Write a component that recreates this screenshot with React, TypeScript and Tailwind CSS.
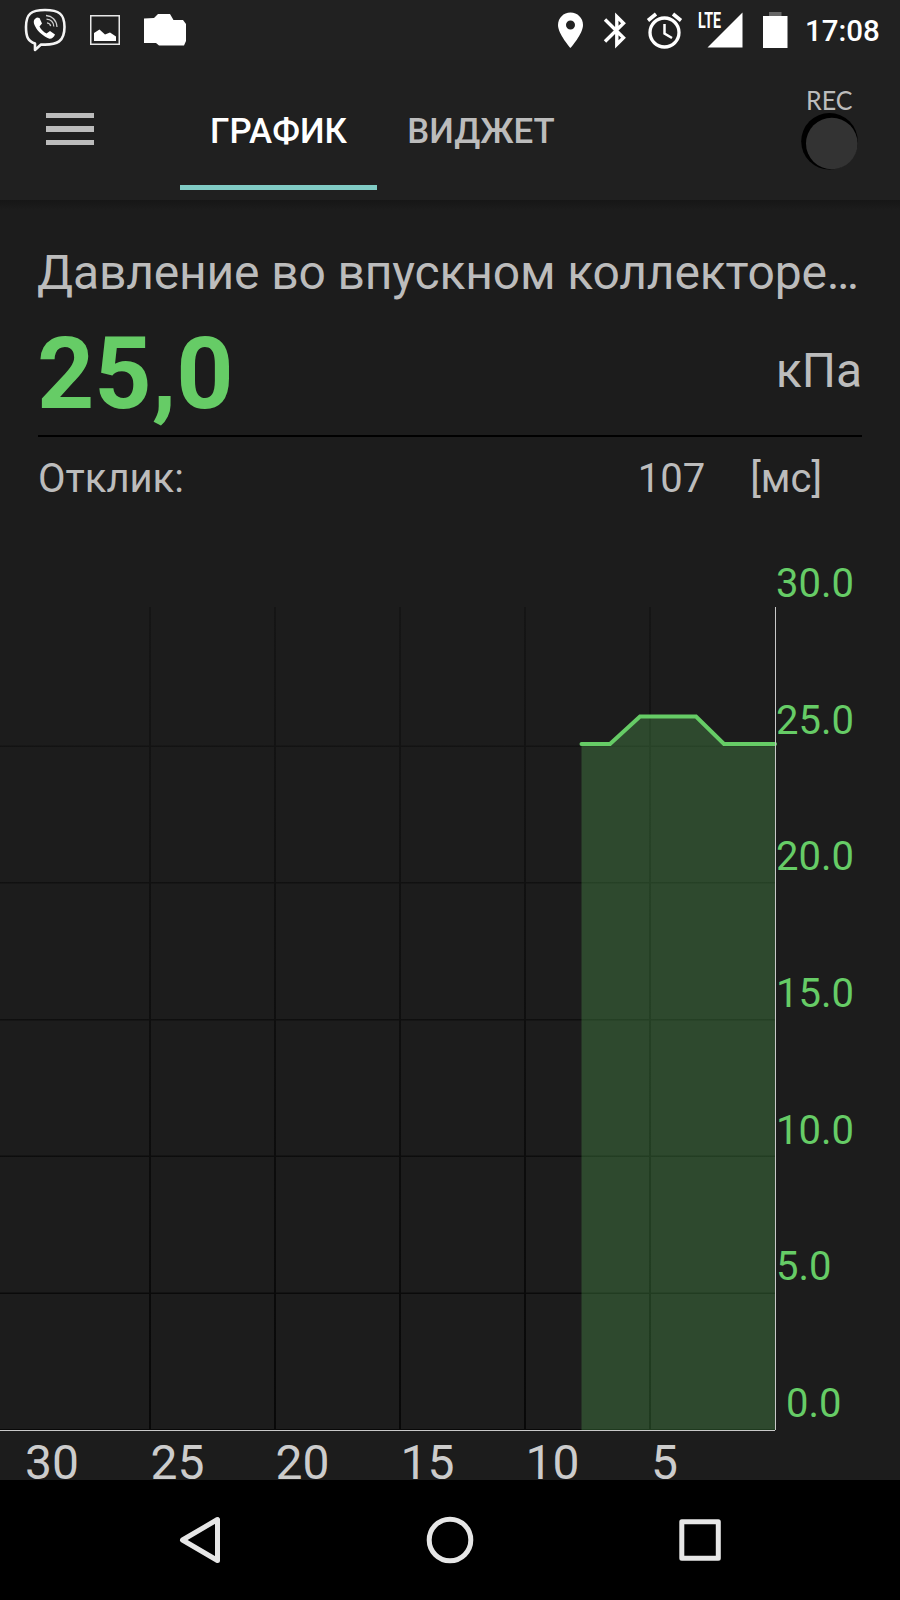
import React from 'react';

const GREEN = '#66cc66';

const yLabels = [
  { text: '30.0', x: 776, y: 396.5 },
  { text: '25.0', x: 776, y: 533.5 },
  { text: '20.0', x: 776, y: 670 },
  { text: '15.0', x: 776, y: 807 },
  { text: '10.0', x: 776, y: 943.5 },
  { text: '5.0', x: 776, y: 1080 },
  { text: '0.0', x: 786, y: 1216.5 },
];

const xLabels = [
  { text: '30', x: 25 },
  { text: '25', x: 150.5 },
  { text: '20', x: 275.5 },
  { text: '15', x: 400.5 },
  { text: '10', x: 525.5 },
  { text: '5', x: 651 },
];

const gridX = [150, 275, 400, 525, 650];
const gridY = [546.5, 683, 820, 956.5, 1093.5];

function ViberIcon() {
  return (
    <svg className="h-[60px] w-[44px]" viewBox="23 0 44 60" fill="none">
      <path
        d="M45 10C31 10 26 14 26 27C26 37 28 41 35 43.5V50L41 44.5C58 45.5 64.5 41 64.5 27C64.5 14 59 10 45 10Z"
        stroke="#f4f4f4"
        strokeWidth="2.6"
        strokeLinejoin="round"
      />
      <path
        d="M37 17.5C33.5 19 33 22 35 26C38 32 43 36 49.5 38.8C52 39 54 37 55 34.5L50 31L46.5 33.5C43.5 32 41 29.5 39.5 26.5L42 23.5L39.5 18Z"
        fill="#fff"
      />
      <path
        d="M46 15.5C52 16 56.5 20 57 27M46.5 19.2C51 19.5 53.5 22 53.8 26.5M47 22.8C49 23 50.3 24 50.7 26.2"
        stroke="#ccc"
        strokeWidth="1.3"
      />
    </svg>
  );
}

function StatusBar() {
  return (
    <div className="flex h-[60px] items-center bg-[#212121] pr-[20px] pl-[23px]">
      <ViberIcon />
      <svg className="ml-[22px] h-[60px] w-[32px]" viewBox="89 0 32 60" fill="none">
        <rect x="90.75" y="15.75" width="28.5" height="28.5" stroke="#e8e8e8" strokeWidth="1.5" />
        <path d="M94 41V33L99.5 29.5L105 34.5L110 32.5L116 36.5V41Z" fill="#fff" />
      </svg>
      <svg className="ml-[22px] h-[60px] w-[44px]" viewBox="143 0 44 60" fill="#fff">
        <path d="M144 18.5L154 18L158 14H170L173.5 20H183L186 24V41L184 45.5H159L156 43H144Z" />
      </svg>

      <div className="ml-auto flex items-center">
        <svg className="h-[60px] w-[27px]" viewBox="557 0 27 60" fill="#fff">
          <path
            fillRule="evenodd"
            d="M570.5 12.5C563.5 12.5 558 18 558 25C558 34 570.5 48 570.5 48S583 34 583 25C583 18 577.5 12.5 570.5 12.5ZM570.5 20.5A4.5 4.5 0 1 1 570.5 29.5A4.5 4.5 0 1 1 570.5 20.5Z"
          />
        </svg>
        <svg className="ml-[19px] h-[60px] w-[25px]" viewBox="603 0 25 60" fill="none">
          <path
            d="M605 19.5L623.5 37.8L616.8 44.5V16.5L623.5 23.2L605 41.5"
            stroke="#fff"
            strokeWidth="3.4"
          />
        </svg>
        <svg className="ml-[18px] h-[60px] w-[38px]" viewBox="646 0 38 60" fill="none" stroke="#fff">
          <circle cx="664.5" cy="32.5" r="14.5" strokeWidth="3.3" />
          <path d="M664.5 24V33.5L672 38" strokeWidth="2.5" />
          <path d="M648 20.5L656 14M673 14L681 20.5" strokeWidth="3.6" />
        </svg>
        <svg className="ml-[13px] h-[60px] w-[47px]" viewBox="697 0 47 60" fill="#fff">
          <path d="M742.5 12.5V47.5H707.5Z" />
          <text
            x="698"
            y="28"
            fontFamily="Roboto, sans-serif"
            fontWeight="700"
            fontSize="21.5"
            textLength="23"
            lengthAdjust="spacingAndGlyphs"
          >
            LTE
          </text>
        </svg>
        <svg className="ml-[18px] h-[60px] w-[26px]" viewBox="762 0 26 60">
          <rect x="769" y="12" width="12.5" height="4" fill="#666" />
          <rect x="763" y="16" width="24.5" height="32" fill="#fff" />
        </svg>
        <span className="ml-[17px] w-[75px] text-[29.5px] leading-[60px] font-medium whitespace-nowrap text-white">
          <span className="relative top-px">17:08</span>
        </span>
      </div>
    </div>
  );
}

function AppBar() {
  return (
    <header className="flex h-[140px] items-start bg-[#202020]">
      <div className="mt-[53px] ml-[46px] flex w-[47.5px] flex-col gap-[8px]">
        <div className="h-[5.3px] bg-[#bcbcbc]" />
        <div className="h-[5.3px] bg-[#bcbcbc]" />
        <div className="h-[5.3px] bg-[#bcbcbc]" />
      </div>
      <nav className="ml-[86.5px] flex text-[34.8px] font-medium">
        <div className="h-[130px] w-[197px] border-b-[5px] border-[#80cbc4] text-center leading-[143px] text-white">
          ГРАФИК
        </div>
        <div className="h-[130px] w-[208px] text-center leading-[143px] text-[#bcbcbc]">ВИДЖЕТ</div>
      </nav>
      <svg className="mt-[20px] ml-[215px] h-[100px] w-[60px]" viewBox="800 80 60 100">
        <text
          x="806"
          y="109.5"
          fontFamily="Lato, sans-serif"
          fontSize="26.5"
          fill="#bcbcbc"
          textLength="46.5"
          lengthAdjust="spacingAndGlyphs"
        >
          REC
        </text>
        <circle cx="829.5" cy="141.3" r="28.3" fill="#000" />
        <circle cx="831.8" cy="143.5" r="25.8" fill="#333" />
      </svg>
    </header>
  );
}

function Reading() {
  return (
    <section className="px-[38px] pt-[45px] text-[#bcbcbc]">
      <h1 className="-ml-px text-[48px] leading-[56px] tracking-[-0.16px] whitespace-nowrap">
        Давление во впускном коллекторе…
      </h1>
      <div className="flex h-[136px] items-center justify-between border-b-2 border-black pt-[5px]">
        <span className="mt-[6px] -ml-px text-[100px] leading-[100px] font-bold text-[#66cc66]">25,0</span>
        <span className="text-[48px]">кПа</span>
      </div>
      <div className="flex h-[65px] items-end text-[40px] leading-[47px]">
        <span>Отклик:</span>
        <span className="ml-auto">107</span>
        <span className="ml-[45px] mr-[40px]">[мс]</span>
      </div>
    </section>
  );
}

function Chart() {
  return (
    <svg
      className="block h-[978px] w-full overflow-visible"
      viewBox="0 302 900 978"
      fontFamily="Roboto, sans-serif"
    >
      <defs>
        <linearGradient id="grid" gradientUnits="userSpaceOnUse" x1="0" y1="407" x2="0" y2="1230">
          <stop offset="0" stopColor="#151515" />
          <stop offset="1" stopColor="#080808" />
        </linearGradient>
      </defs>
      {gridX.map((x) => (
        <rect key={x} x={x - 1} y="407" width="2" height="823" fill="url(#grid)" />
      ))}
      {gridY.map((y) => (
        <rect key={y} x="0" y={y - 1} width="775" height="1.5" fill="url(#grid)" />
      ))}
      <rect x="0" y="1229" width="775" height="1" fill="#080808" />

      {/* data */}
      <path d="M581.5 544H610L640 516.5H696L724 544H775V1230H581.5Z" fill={GREEN} fillOpacity="0.26" />
      <path
        d="M581.5 544H610L640 516.5H696L724 544H775"
        fill="none"
        stroke={GREEN}
        strokeWidth="4"
        strokeLinecap="round"
      />

      {/* axes */}
      <rect x="775" y="407" width="1" height="823" fill="#c8c8c8" />
      <rect x="0" y="1230" width="775" height="1" fill="#c8c8c8" />

      {yLabels.map((label) => (
        <text key={label.text} x={label.x} y={label.y} fontSize="40" fill={GREEN}>
          {label.text}
        </text>
      ))}
      {xLabels.map((label) => (
        <text key={label.text} x={label.x} y="1279" fontSize="48" fill="#cccccc">
          {label.text}
        </text>
      ))}
    </svg>
  );
}

function NavBar() {
  return (
    <footer className="flex h-[120px] items-center bg-black px-[175px]">
      <svg
        className="h-[50px] w-[50px]"
        viewBox="0 0 50 50"
        fill="none"
        stroke="#e6e6e6"
        strokeWidth="5"
        strokeLinejoin="round"
      >
        <path d="M42.5 4.5V45.5L7.5 25Z" />
      </svg>
      <svg className="ml-[200px] h-[50px] w-[50px]" viewBox="0 0 50 50" fill="none" stroke="#e6e6e6" strokeWidth="5">
        <circle cx="25" cy="25" r="20.8" />
      </svg>
      <svg
        className="ml-[200px] h-[50px] w-[50px]"
        viewBox="0 0 50 50"
        fill="none"
        stroke="#e6e6e6"
        strokeWidth="5"
        strokeLinejoin="round"
      >
        <rect x="6.8" y="6.8" width="36.5" height="36.5" />
      </svg>
    </footer>
  );
}

export default function App() {
  return (
    <div className="flex h-[1600px] w-[900px] flex-col overflow-hidden bg-[#1c1c1c] font-['Roboto',sans-serif]">
      <StatusBar />
      <AppBar />
      <main className="flex h-[1280px] flex-col bg-[linear-gradient(#161616,#1c1c1c_10px)]">
        <Reading />
        <Chart />
      </main>
      <NavBar />
    </div>
  );
}
